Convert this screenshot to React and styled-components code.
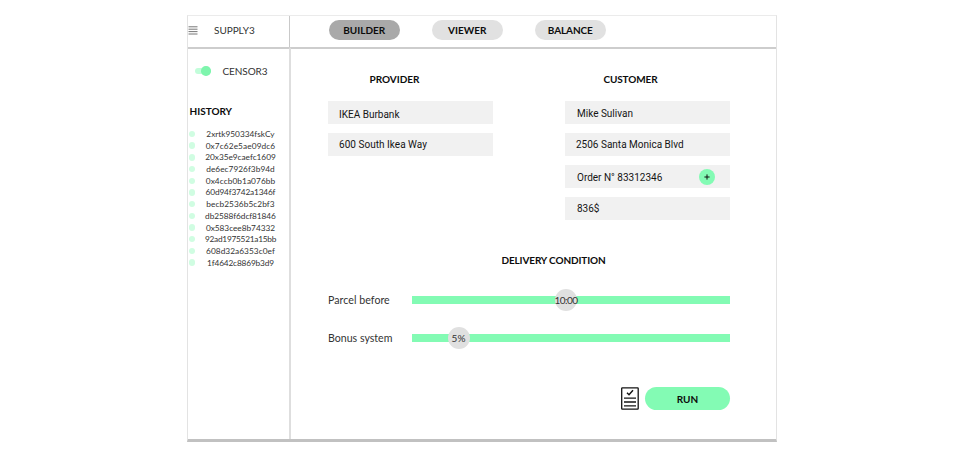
import React from 'react';
import styled, { createGlobalStyle } from 'styled-components';

const GlobalStyle = createGlobalStyle`
  *, *::before, *::after { box-sizing: border-box; }
  body { margin: 0; background: #fff; font-family: Lato, sans-serif; color: #111; }
  button { border: 0; padding: 0; font: inherit; color: inherit; }
  h2, ul { margin: 0; padding: 0; }
`;

const Frame = styled.div`
  width: 590px;
  height: 427px;
  margin: 15px 0 0 187px;
  display: grid;
  grid-template-columns: 102px 1fr;
  grid-template-rows: 31px 1fr;
  border: 1px solid #e3e3e3;
  border-top-color: #ebebeb;
  border-bottom: 3px solid #c1c1c1;
`;

const Brand = styled.div`
  display: flex;
  align-items: center;
  padding: 0 0 3px 0;
  border-right: 1px solid #c9c9c9;
`;

const Label = styled.span`
  font-size: ${({ $size = 10 }) => $size}px;
  letter-spacing: ${({ $track = 0 }) => $track}px;
  line-height: 14px;
  white-space: nowrap;
  color: #333;
`;

const BrandName = styled(Label)`
  margin-left: 16px;
`;

const Tabs = styled.nav`
  display: flex;
  align-items: center;
  gap: 31.5px;
  padding: 0 0 3px 38.5px;
`;

const Tab = styled.button`
  width: 71.5px;
  height: 20px;
  border-radius: 10px;
  background: ${({ $active }) => ($active ? '#a9a9a9' : '#e1e1e1')};
  color: #0c0c0c;
  font-size: 10px;
  font-weight: 700;
  line-height: 20px;
  letter-spacing: ${({ $track = 0 }) => $track}px;
`;

const Side = styled.aside`
  border-top: 2px solid #cdcdcd;
  border-right: 1px solid #dedede;
  padding-top: 15px;
`;

const Censor = styled.div`
  display: flex;
  align-items: center;
  height: 14px;
  padding-left: 7px;
`;

const Toggle = styled.span`
  width: 15.5px;
  height: 6px;
  border-radius: 3px;
  background: #c2fdda;
  display: flex;
  align-items: center;
  justify-content: flex-end;
  margin-right: 12px;
`;

const Knob = styled.span`
  width: 9.5px;
  height: 9.5px;
  flex: none;
  border-radius: 50%;
  background: #7ef5ad;
`;

const Heading = styled.h2`
  font-size: 10px;
  font-weight: 700;
  line-height: 14px;
  letter-spacing: ${({ $track = 0 }) => $track}px;
  text-align: center;
  color: #0c0c0c;
`;

const HistoryHeading = styled(Heading)`
  margin: 26px 0 9px 1.5px;
  text-align: left;
`;

const HistoryList = styled.ul`
  list-style: none;
`;

const HistoryRow = styled.li`
  display: grid;
  grid-template-columns: 7px 85px;
  column-gap: 2.3px;
  align-items: center;
  height: 11.69px;
  padding-left: 0.7px;
  text-align: center;
`;

const Dot = styled.span`
  width: 6.5px;
  height: 6.5px;
  border-radius: 50%;
  background: #d0fde2;
`;

const Main = styled.main`
  border-top: 2px solid #cdcdcd;
  border-left: 1px solid #dedede;
  padding: 23px 46px 0 37px;
`;

const Parties = styled.div`
  display: flex;
  justify-content: space-between;
`;

const Party = styled.section`
  width: 165px;
  height: 148px;
  display: flex;
  flex-direction: column;
  gap: 9px;
`;

const PartyHeading = styled(Heading)`
  margin-bottom: 6px;
  padding-right: ${({ $shift }) => $shift}px;
`;

const Field = styled.div`
  display: flex;
  align-items: center;
  justify-content: space-between;
  flex: none;
  height: 23px;
  padding: ${({ $drop = 0 }) => $drop}px 15px 0 ${({ $inset = 11 }) => $inset}px;
  background: #f1f1f1;
  font-family: Roboto, sans-serif;
  font-size: 10px;
  letter-spacing: ${({ $track = 0 }) => $track}px;
  color: #151515;
`;

const AddButton = styled.button`
  width: 16px;
  height: 16px;
  border-radius: 50%;
  background: #83fbb4;
  display: grid;
  place-items: center;
`;

const ConditionHeading = styled(Heading)`
  margin-top: 33px;
  padding-left: 49px;
`;

const SliderRow = styled.div`
  display: grid;
  grid-template-columns: 84px 1fr;
  align-items: center;
  height: 22px;
  margin-top: ${({ $gap }) => $gap}px;
`;

const Track = styled.div`
  position: relative;
  height: 8.5px;
  background: #83fbb4;
`;

const Thumb = styled.div`
  position: absolute;
  left: ${({ $at }) => $at}px;
  top: 50%;
  width: 22px;
  height: 22px;
  transform: translate(-50%, -50%);
  border-radius: 50%;
  background: #e0e0e0;
  display: flex;
  align-items: center;
  justify-content: center;
`;

const Actions = styled.div`
  display: flex;
  justify-content: flex-end;
  align-items: center;
  gap: 6px;
  margin-top: 38px;
`;

const RunButton = styled.button`
  width: 85px;
  height: 22.5px;
  border-radius: 12px;
  background: #83fbb4;
  color: #0c0c0c;
  font-size: 10px;
  font-weight: 700;
`;

const Burger = () => (
  <svg width="10" height="9" viewBox="0 0 10 9" stroke="#777" strokeWidth="1">
    <path d="M0.5 .8h9M0.5 3.2h9M0.5 5.6h9M0.5 8h9" />
  </svg>
);

const Checklist = () => (
  <svg width="18" height="23" viewBox="0 0 18 23" fill="none" stroke="#141414" strokeWidth="1.3">
    <rect x=".7" y=".8" width="16.5" height="21.3" rx=".6" />
    <path d="M3 11.1h12M3 15h12M3 18.8h12" />
    <path d="M6 5.8l2 1.9 4-4.5" strokeWidth="1.5" />
  </svg>
);

const history = [
  ['2xrtk950334fskCy', 0],
  ['0x7c62e5ae09dc6', 0.1],
  ['20x35e9caefc1609', -0.03],
  ['de6ec7926f3b94d', 0.03],
  ['0x4ccb0b1a076bb', 0.07],
  ['60d94f3742a1346f', -0.16],
  ['becb2536b5c2bf3', 0.07],
  ['db2588f6dcf81846', -0.07],
  ['0x583cee8b74332', -0.03],
  ['92ad1975521a15bb', -0.25],
  ['608d32a6353c0ef', 0.05],
  ['1f4642c8869b3d9', -0.15],
];

export default function App() {
  return (
    <>
      <GlobalStyle />
      <Frame>
        <Brand>
          <Burger />
          <BrandName $track={-0.05}>SUPPLY3</BrandName>
        </Brand>
        <Tabs>
          <Tab $active>BUILDER</Tab>
          <Tab>VIEWER</Tab>
          <Tab $track={-0.1}>BALANCE</Tab>
        </Tabs>
        <Side>
          <Censor>
            <Toggle><Knob /></Toggle>
            <Label $track={-0.08}>CENSOR3</Label>
          </Censor>
          <HistoryHeading>HISTORY</HistoryHeading>
          <HistoryList>
            {history.map(([hash, track]) => (
              <HistoryRow key={hash}>
                <Dot />
                <Label $size={8.3} $track={track}>{hash}</Label>
              </HistoryRow>
            ))}
          </HistoryList>
        </Side>
        <Main>
          <Parties>
            <Party>
              <PartyHeading $shift={32}>PROVIDER</PartyHeading>
              <Field $drop={3}>IKEA Burbank</Field>
              <Field $track={0.03}>600 South Ikea Way</Field>
            </Party>
            <Party>
              <PartyHeading $shift={34} $track={-0.1}>CUSTOMER</PartyHeading>
              <Field $inset={12} $drop={1}>Mike Sulivan</Field>
              <Field>2506 Santa Monica Blvd</Field>
              <Field $inset={12} $drop={1}>
                Order N° 83312346
                <AddButton aria-label="Add order">
                  <svg width="6" height="6" viewBox="0 0 6 6" stroke="#111" strokeWidth="1">
                    <path d="M.4 3h5.2M3 .4v5.2" />
                  </svg>
                </AddButton>
              </Field>
              <Field $inset={12}>836$</Field>
            </Party>
          </Parties>
          <ConditionHeading $track={-0.12}>DELIVERY CONDITION</ConditionHeading>
          <SliderRow $gap={22}>
            <Label $size={10.6} $track={0.05}>Parcel before</Label>
            <Track>
              <Thumb $at={154}><Label $track={-0.5}>10:00</Label></Thumb>
            </Track>
          </SliderRow>
          <SliderRow $gap={16}>
            <Label $size={10.6}>Bonus system</Label>
            <Track>
              <Thumb $at={46.5}><Label>5%</Label></Thumb>
            </Track>
          </SliderRow>
          <Actions>
            <Checklist />
            <RunButton>RUN</RunButton>
          </Actions>
        </Main>
      </Frame>
    </>
  );
}
